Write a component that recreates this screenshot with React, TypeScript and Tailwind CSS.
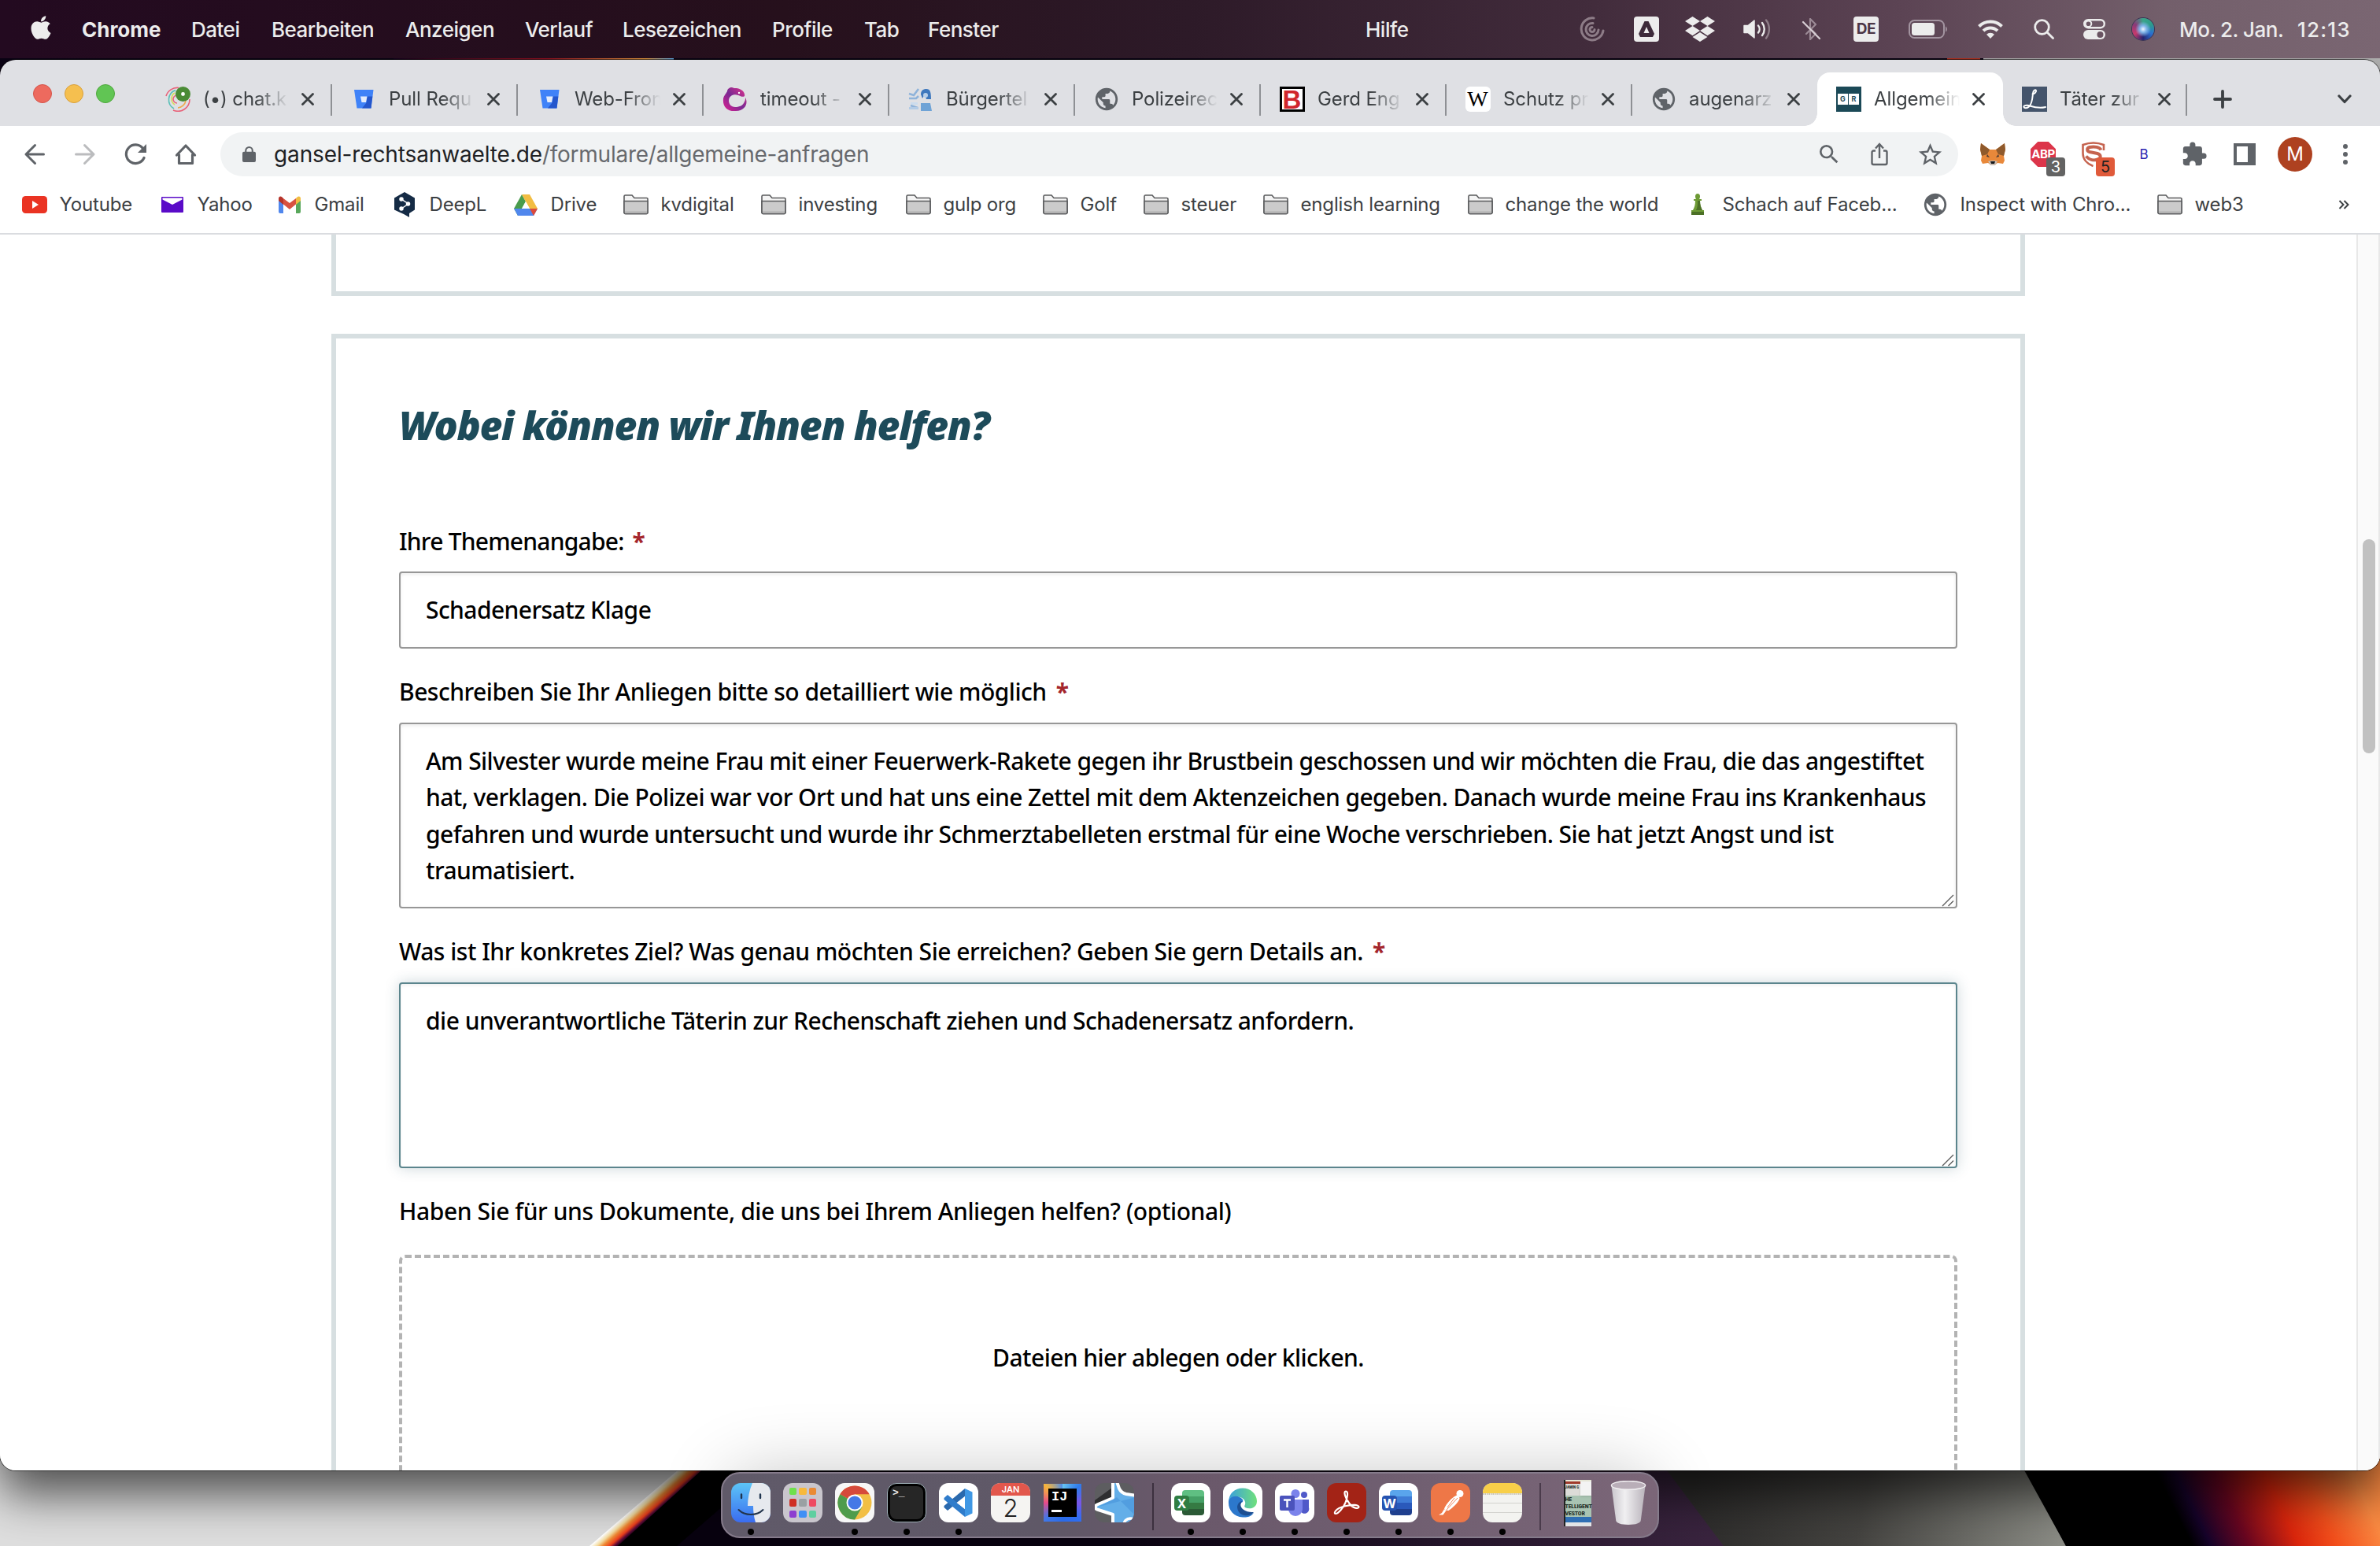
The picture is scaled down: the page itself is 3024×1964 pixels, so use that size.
import type { ReactNode } from "react";
import { FaApple, FaDropbox } from "react-icons/fa";
import { MdExtension, MdPublic, MdSearch, MdStarBorder } from "react-icons/md";

const menuItems: [string, string][] = [
  ["Datei", "w-[102px]"],
  ["Bearbeiten", "w-[170px]"],
  ["Anzeigen", "w-[152px]"],
  ["Verlauf", "w-[124px]"],
  ["Lesezeichen", "w-[190px]"],
  ["Profile", "w-[117px]"],
  ["Tab", "w-[81px]"],
  ["Fenster", "w-[556px]"],
  ["Hilfe", "w-[80px]"],
];

function AppleMenuBar() {
  return (
    <header className="relative z-20 flex h-[74px] shrink-0 items-center bg-[linear-gradient(to_right,#230a20_0%,#26101c_33%,#2d1a28_50%,#422c3c_67%,#5c4454_80%,#735f6b_91%,#7a6672_100%)] text-[26px] font-medium tracking-[-0.5px] text-[#ececec]">
      <div className="flex w-[104px] justify-center pb-1">
        <FaApple className="h-[34px] w-[30px]" />
      </div>
      <div className="w-[139px] font-bold tracking-normal">Chrome</div>
      {menuItems.map(([label, width]) => (
        <div key={label} className={"shrink-0 whitespace-nowrap " + width}>{label}</div>
      ))}
      <div className="ml-[174px] flex h-full items-center">
        <Tray width="w-[67px]">
          <svg viewBox="0 0 32 32" className="size-8" fill="none" stroke="#8d7c87" strokeWidth="3" strokeLinecap="round">
            <path d="M18 2A14 14 0 1 0 30 18" />
            <path d="M17 8.500A8 8 0 1 0 24 17" />
            <path d="M16 13.500a3 3 0 1 0 3 3" />
          </svg>
        </Tray>
        <Tray width="w-[72px]">
          <svg viewBox="0 0 32 32" className="size-8">
            <rect width="32" height="32" rx="4" fill="#ececec" />
            <path d="M13.500 6h5l7.500 16-2 4H8l-2-4z" fill="#3d2a3a" />
            <path d="M16 13l3.500 8h-7z" fill="#ececec" />
          </svg>
        </Tray>
        <Tray width="w-[64px]"><FaDropbox className="size-[38px]" /></Tray>
        <Tray width="w-[82px]">
          <svg viewBox="0 0 36 28" className="h-7 w-9" fill="none" strokeWidth="2.400" strokeLinecap="round">
            <path d="M1 9.500h5L14 3v22l-8-6.500H1z" fill="#ececec" stroke="#ececec" strokeWidth="1.500" strokeLinejoin="round" />
            <path d="M19 9.500a7 7 0 0 1 0 9" stroke="#ececec" />
            <path d="M24 6a13 13 0 0 1 0 16" stroke="#ececec" />
            <path d="M29 2.500a19 19 0 0 1 0 23" stroke="#8d7c87" />
          </svg>
        </Tray>
        <Tray width="w-[54px]">
          <svg viewBox="0 0 24 28" className="h-7 w-6" fill="none" stroke="#9c8b96" strokeWidth="2.200" strokeLinecap="round" strokeLinejoin="round">
            <path d="M6 20l12-12-7-7v26l7-7-5-5" />
            <path d="M2 5l21 21" stroke="#d8cfd5" />
          </svg>
        </Tray>
        <Tray width="w-[86px]">
          <div className="flex size-8 items-center justify-center rounded bg-[#ececec] text-[19px] font-bold text-[#4b3645]">DE</div>
        </Tray>
        <Tray width="w-[72px]">
          <svg viewBox="0 0 50 24" className="h-6 w-[50px]">
            <rect x="1" y="1" width="44" height="22" rx="6.500" fill="none" stroke="#a394a0" strokeWidth="2" />
            <rect x="4" y="4" width="29" height="16" rx="3.500" fill="#ececec" />
            <path d="M47 8.500c2.500 1 2.500 6 0 7z" fill="#a394a0" />
          </svg>
        </Tray>
        <Tray width="w-[86px]">
          <svg viewBox="0 0 32 24" className="h-6 w-8" fill="none" stroke="#ececec" strokeWidth="4">
            <path d="M1.500 8.500a20.500 20.500 0 0 1 29 0" />
            <path d="M7 14.200a12.800 12.800 0 0 1 18 0" />
            <path d="M16 24l-5-5.200a7 7 0 0 1 10 0z" fill="#ececec" stroke="none" />
          </svg>
        </Tray>
        <Tray width="w-[50px]">
          <svg viewBox="0 0 26 26" className="size-[26px]" fill="none" stroke="#ececec" strokeWidth="2.800" strokeLinecap="round">
            <circle cx="10.500" cy="10.500" r="8.800" />
            <path d="M17 17l7.500 7.500" />
          </svg>
        </Tray>
        <Tray width="w-[78px]">
          <svg viewBox="0 0 28 26" className="h-[26px] w-7">
            <rect x="1.200" y="1.200" width="25.600" height="10" rx="5" fill="none" stroke="#ececec" strokeWidth="2.400" />
            <circle cx="6.500" cy="6.200" r="3.800" fill="none" stroke="#ececec" strokeWidth="2" />
            <rect y="14" width="28" height="12" rx="6" fill="#ececec" />
            <circle cx="21.500" cy="20" r="4" fill="#6a5462" />
          </svg>
        </Tray>
        <Tray width="w-[46px]">
          <div className="size-7 rounded-full bg-[radial-gradient(circle_at_50%_50%,#eef4ff_0%,#7fb4e8_22%,transparent_50%),conic-gradient(#3aa58a,#2d9c8c,#2b6fd0,#25246e,#c73a6c,#8a3a78,#3aa58a)] ring-1 ring-[#3a3555]" />
        </Tray>
        <div className="ml-[23px] w-[150px] whitespace-nowrap">Mo. 2. Jan.</div>
        <div className="tracking-[1.200px]">12:13</div>
      </div>
    </header>
  );
}

function Tray({ width, children }: { width: string; children: ReactNode }) {
  return <div className={"flex shrink-0 justify-center " + width}>{children}</div>;
}

function Globe() {
  return <MdPublic className="size-[34px] shrink-0 text-[#5f6368]" />;
}

function BitbucketIcon() {
  return (
    <svg viewBox="0 0 32 32" className="size-8">
      <path d="M4 4h24.500l-3 23.500h-18z" fill="#3f82f8" />
      <path d="M20.500 12.500h6.800l-1.800 15H14l5.500-7z" fill="#2456cc" />
      <path d="M12 12.500h8.500l-1.500 7.500h-5.500z" fill="#e4ecfb" />
    </svg>
  );
}

function ChatIcon() {
  return (
    <svg viewBox="0 0 32 32" className="size-8" fill="none" strokeWidth="1.600">
      <path d="M1 12A15 15 0 0 1 17 1.500M31 16a15 15 0 0 1-21 14" stroke="#e8637a" />
      <path d="M11 28A13 13 0 0 1 13 4.500" stroke="#5cc0b8" />
      <path d="M12 23A9 9 0 0 1 12 8" stroke="#d6de5a" />
      <path d="M16 27a11 11 0 0 0 10-9" stroke="#f0a94c" />
      <path d="M15 21a5 5 0 0 1 0-10" stroke="#e8637a" />
      <circle cx="22.500" cy="9.500" r="9.500" fill="#4a8b35" />
      <circle cx="22.500" cy="9.500" r="2.400" fill="#fff" />
    </svg>
  );
}

function RxIcon() {
  return (
    <svg viewBox="0 0 32 32" className="size-8">
      <defs>
        <linearGradient id="rx" x1="1" y1="0" x2="0" y2="1">
          <stop offset="0" stopColor="#e8318c" />
          <stop offset=".5" stopColor="#7a2a93" />
          <stop offset="1" stopColor="#e01e90" />
        </linearGradient>
      </defs>
      <path d="M6 6c0-3 3-5 6-5 2 1 4 1 6 1 7 1 11 6 10 10-2 2-5 0-8-1-5-2-12 0-12 7 0 5 4 8 8 8 6 0 10-2 12-7 1-2 1-3 1-5 4 7 0 17-12 17C6 32 0 25 1 16c0-3 2-5 5-10z" fill="url(#rx)" />
      <circle cx="21" cy="8" r="1.200" fill="#fff" />
    </svg>
  );
}

function CityIcon() {
  return (
    <svg viewBox="0 0 32 32" className="size-8">
      <path d="M1 9l6 2 6-8M1 15h9l3-3M3 24l9 3" stroke="#8fb3da" strokeWidth="2.600" fill="none" />
      <path d="M16 10c0-6 4-7 7-7 5 0 6 4 6 13h-6l-2-6-3 5z" fill="#3f78bd" />
      <circle cx="22" cy="11" r="3" fill="#b9d0ea" />
      <path d="M16 21h12l2 10H16z" fill="#6fa3d6" />
      <path d="M3 20h9v3H3z" fill="#cbdcee" />
      <path d="M1 26h12v3H1z" fill="#b2cbe6" />
    </svg>
  );
}

const tabs: { title: string; width: string; icon: ReactNode; active?: boolean }[] = [
  { title: "(•) chat.k", width: "w-[236px]", icon: <ChatIcon /> },
  { title: "Pull Requ", width: "w-[236px]", icon: <BitbucketIcon /> },
  { title: "Web-Fron", width: "w-[236px]", icon: <BitbucketIcon /> },
  { title: "timeout -", width: "w-[236px]", icon: <RxIcon /> },
  { title: "Bürgertel", width: "w-[236px]", icon: <CityIcon /> },
  { title: "Polizeirec", width: "w-[236px]", icon: <Globe /> },
  {
    title: "Gerd Eng",
    width: "w-[236px]",
    icon: <div className="flex size-8 items-center justify-center border-[3px] border-black bg-white font-['Liberation_Sans'] text-[33px] leading-none font-bold text-[#d0262c]">B</div>,
  },
  {
    title: "Schutz pr",
    width: "w-[236px]",
    icon: <div className="flex size-8 items-center justify-center rounded-md bg-white font-['Liberation_Serif'] text-[28px] leading-none text-black">W</div>,
  },
  { title: "augenarz", width: "w-[235px]", icon: <Globe /> },
  {
    title: "Allgemein",
    width: "w-[236px]",
    active: true,
    icon: (
      <div className="flex size-8 items-center justify-center gap-px bg-[#1b4957]">
        <span className="flex h-3.5 w-[13px] items-center justify-center bg-white text-[9px] font-bold text-[#1b4957]">G</span>
        <span className="flex h-3.5 w-[13px] items-center justify-center bg-white text-[9px] font-bold text-[#1b4957]">R</span>
      </div>
    ),
  },
  {
    title: "Täter zur",
    width: "w-[234px]",
    icon: (
      <svg viewBox="0 0 32 32" className="size-8">
        <rect width="32" height="32" fill="#44546b" />
        <path d="M13.500 9.500c2.500 0 5-3 4.500-4.500s-3.500-.5-4 3.500-.5 13-5 17c-2.500 2.300-6 2-6.500.500s2.500-3 6-2 12 4.500 21.500 2" fill="none" stroke="#fff" strokeWidth="2" strokeLinecap="round" />
      </svg>
    ),
  },
];

function TabStrip() {
  return (
    <div className="flex h-[84px] items-end bg-[#dfe0e4] text-[#3c4043]">
      <div className="flex w-[186px] shrink-0 gap-4 self-start pt-[31px] pl-[42px]">
        <i className="size-6 rounded-full border border-[#d5544a] bg-[#ed6a5e]" />
        <i className="size-6 rounded-full border border-[#d9a03c] bg-[#f5bf4f]" />
        <i className="size-6 rounded-full border border-[#4fa73d] bg-[#61c554]" />
      </div>
      {tabs.map((tab, i) => (
        <div key={i} className={"relative flex h-[68px] shrink-0 items-center " + tab.width + (tab.active ? " rounded-t-2xl bg-white" : "")}>
          {tab.active && (
            <>
              <i className="absolute bottom-0 -left-4 size-4 bg-[radial-gradient(circle_at_0_0,transparent_15.500px,white_16px)]" />
              <i className="absolute -right-4 bottom-0 size-4 bg-[radial-gradient(circle_at_100%_0,transparent_15.500px,white_16px)]" />
            </>
          )}
          <div className="ml-[23px] flex w-[33px] justify-center">{tab.icon}</div>
          <div className="ml-4 w-[124px] text-[24px] tracking-[-0.1px] whitespace-nowrap [mask-image:linear-gradient(to_right,black_54%,transparent_88%)]">{tab.title}</div>
          <svg viewBox="0 0 16 16" className="ml-px size-4 shrink-0" stroke="#3c4043" strokeWidth="2.800" strokeLinecap="round">
            <path d="M1.500 1.500l13 13M14.500 1.500l-13 13" />
          </svg>
          {i !== 8 && !tab.active && <i className="absolute top-[15px] right-0 h-10 w-0.5 bg-[#8e9094]" />}
        </div>
      ))}
      <div className="flex h-[68px] flex-1 items-center justify-between pr-9 pl-[33px]">
        <svg viewBox="0 0 24 24" className="size-6" stroke="#3c4043" strokeWidth="3.800" strokeLinecap="round">
          <path d="M12 2v20M2 12h20" />
        </svg>
        <svg viewBox="0 0 18 12" className="h-3 w-[18px]" fill="none" stroke="#3c4043" strokeWidth="3.200" strokeLinecap="round" strokeLinejoin="round">
          <path d="M2 2l7 7.500L16 2" />
        </svg>
      </div>
    </div>
  );
}

function ToolButton({ children }: { children: ReactNode }) {
  return <div className="flex h-14 w-16 shrink-0 items-center justify-center">{children}</div>;
}

function Fox() {
  return (
    <svg viewBox="0 0 32 32" className="size-8">
      <path d="M1 2l11 8h8L31 2l1 8-2 8 1 6-2 4-7-1-4 3h-4l-4-3-7 1-2-4 1-6-2-8z" fill="#e8883a" />
      <path d="M1 2l11 8-3 6-7 2-2-8zM31 2L20 10l3 6 7 2 2-8z" fill="#8f5a2c" />
      <path d="M9 16l3 4-4-1zM23 16l-3 4 4-1z" fill="#4a3a35" />
      <path d="M10 25l3 5h6l3-5-4-1h-4z" fill="#c9bdb3" />
      <path d="M13 25h6l-1 3h-4z" fill="#16181c" />
    </svg>
  );
}

function Toolbar() {
  return (
    <div className="flex h-[72px] items-center bg-white pl-3 text-[#5f6368]">
      <ToolButton>
        <svg viewBox="0 0 28 28" className="size-7" fill="none" stroke="#5f6368" strokeWidth="3" strokeLinecap="round" strokeLinejoin="round">
          <path d="M14.500 2.500L3 14l11.500 11.500M3 14h22.500" />
        </svg>
      </ToolButton>
      <ToolButton>
        <svg viewBox="0 0 28 28" className="size-7" fill="none" stroke="#bbbcbe" strokeWidth="3" strokeLinecap="round" strokeLinejoin="round">
          <path d="M13.500 2.500L25 14 13.500 25.500M25 14H2.500" />
        </svg>
      </ToolButton>
      <ToolButton>
        <svg viewBox="0 0 28 28" className="size-7" fill="none" stroke="#5f6368" strokeWidth="3.200" strokeLinecap="round">
          <path d="M25 18.500A11.800 11.800 0 1 1 23.500 6.500" />
          <path d="M28 1v11H17z" fill="#5f6368" stroke="none" />
        </svg>
      </ToolButton>
      <ToolButton>
        <svg viewBox="0 0 28 28" className="size-7" fill="none" stroke="#5f6368" strokeWidth="3.200" strokeLinecap="round" strokeLinejoin="round">
          <path d="M2.500 15L14 3l11.500 12M5.500 14.500V25.500h17V14.500" />
        </svg>
      </ToolButton>
      <div className="ml-3 flex h-14 w-[2208px] shrink-0 items-center rounded-full bg-[#f1f3f4] pr-1 pl-7">
        <svg viewBox="0 0 18 22" className="h-[22px] w-[17px]">
          <path d="M4.500 9V6a4.500 4.500 0 0 1 9 0v3" fill="none" stroke="#5f6368" strokeWidth="2.200" />
          <rect y="7.500" width="18" height="14" rx="2" fill="#5f6368" />
        </svg>
        <div className="ml-[23px] flex-1 text-[28px] tracking-[-0.13px] text-[#202124]">
          gansel-rechtsanwaelte.de<span className="tracking-[-0.24px] text-[#67696d]">/formulare/allgemeine-anfragen</span>
        </div>
        <ToolButton><MdSearch className="size-8" /></ToolButton>
        <ToolButton>
          <svg viewBox="0 0 22 30" className="h-[30px] w-[22px]" fill="none" stroke="#5f6368" strokeWidth="2.400">
            <path d="M6 10.500H3.500a2 2 0 0 0-2 2V26a2 2 0 0 0 2 2h15a2 2 0 0 0 2-2V12.500a2 2 0 0 0-2-2H16" />
            <path d="M11 20V2.500M6 7.500l5-5.500 5 5.500" />
          </svg>
        </ToolButton>
        <ToolButton><MdStarBorder className="size-[35px]" /></ToolButton>
      </div>
      <div className="ml-3 flex items-center">
        <ToolButton><Fox /></ToolButton>
        <ToolButton>
          <div className="relative size-8">
            <div className="flex size-8 items-center justify-center bg-[#dc354a] text-[15px] font-bold tracking-[-0.5px] text-white [clip-path:polygon(29%_0,71%_0,100%_29%,100%_71%,71%_100%,29%_100%,0_71%,0_29%)]">ABP</div>
            <span className="absolute top-5 left-5 flex size-6 items-center justify-center rounded bg-[#636363] text-[20px] text-white">3</span>
          </div>
        </ToolButton>
        <ToolButton>
          <div className="relative size-8">
            <svg viewBox="0 0 32 32" className="size-8" fill="none" stroke="#c5634f" strokeWidth="2.600">
              <path d="M29 11V4q-13-5-26.500 0v11c0 7 5 13 13 16" />
              <path d="M25.500 10.500C24 7 17 5.500 11 7c-4 1.200-3.500 5 0 6l10 2c5 1.500 4.500 6 1 7.500-6 2-12 0-15.500-4" strokeWidth="4" />
            </svg>
            <span className="absolute top-5 left-[19px] flex size-6 items-center justify-center rounded bg-[#e05a3a] text-[20px] text-[#222]">5</span>
          </div>
        </ToolButton>
        <ToolButton><span className="pt-0.5 text-[17px] text-[#2b25b0]">B</span></ToolButton>
        <ToolButton><MdExtension className="size-[34px]" /></ToolButton>
        <ToolButton><div className="h-7 w-7 border-4 border-r-[10px] border-[#5f6368]" /></ToolButton>
        <ToolButton><div className="flex size-11 items-center justify-center rounded-full bg-[#ae4120] text-[24px] text-white">M</div></ToolButton>
        <ToolButton>
          <div className="flex flex-col gap-1">
            <i className="size-1.5 rounded-full bg-[#5f6368]" />
            <i className="size-1.5 rounded-full bg-[#5f6368]" />
            <i className="size-1.5 rounded-full bg-[#5f6368]" />
          </div>
        </ToolButton>
      </div>
    </div>
  );
}

function Folder() {
  return (
    <svg viewBox="0 0 32 26" className="h-[26px] w-8" stroke="#5b5c5e" strokeWidth="1.600">
      <path d="M1 23V2.500A1.500 1.500 0 0 1 2.500 1H11l3 3.500h15.500A1.500 1.500 0 0 1 31 6v17z" fill="#f4f4f4" />
      <path d="M1 8.500h30V23a1.800 1.800 0 0 1-1.800 1.800H2.800A1.800 1.800 0 0 1 1 23z" fill="#cbcbcb" />
      <path d="M2 22.500h28" stroke="#a9a9a9" />
    </svg>
  );
}

const bookmarks: [string, string, ReactNode][] = [
  ["Youtube", "w-[175px]", (
    <svg viewBox="0 0 32 22" className="h-[22px] w-8"><rect width="32" height="22" rx="4.500" fill="#ea3323" /><path d="M13 6l8 5-8 5z" fill="#fff" /></svg>
  )],
  ["Yahoo", "w-[149px]", (
    <svg viewBox="0 0 28 20" className="h-5 w-7"><rect width="28" height="20" rx="1" fill="#5a0bc8" /><path d="M1.500 1.500h25v2L14 10 1.500 3.500z" fill="#fff" /></svg>
  )],
  ["Gmail", "w-[146px]", (
    <svg viewBox="0 0 28 22" className="h-[22px] w-7">
      <path d="M0 4l6 5v13H2a2 2 0 0 1-2-2z" fill="#5087ed" /><path d="M28 4l-6 5v13h4a2 2 0 0 0 2-2z" fill="#58a75b" />
      <path d="M22 3l2-2c2-1.500 4 0 4 2v3l-6 5z" fill="#f2bd42" /><path d="M0 6V3c0-2 2-3.500 4-2l2 2v8z" fill="#b5342b" />
      <path d="M6 3l8 6 8-6v7.500L14 17l-8-6.500z" fill="#d85140" />
    </svg>
  )],
  ["DeepL", "w-[154px]", (
    <svg viewBox="0 0 28 32" className="h-8 w-7">
      <path d="M14 0l13 7.500v15L20 27v5l-7-4L1 22.500v-15z" fill="#152b45" />
      <g fill="#fff" stroke="#fff" strokeWidth="1.500"><path d="M10 9l9 6-9 6" fill="none" /><circle cx="10" cy="9" r="2" /><circle cx="18.500" cy="15" r="2" /><circle cx="10" cy="21" r="2" /></g>
    </svg>
  )],
  ["Drive", "w-[140px]", (
    <svg viewBox="0 0 30 27" className="h-[27px] w-[30px]">
      <path d="M10 0L0 18l5 9 10-18z" fill="#4a9c4d" /><path d="M10 0h10l10 18H20z" fill="#f2bd42" /><path d="M0 18l5 9h20l5-9z" fill="#5087ed" /><path d="M20 18h10l-5 9z" fill="#dc4a3c" /><path d="M10 18l5-9 5 9z" fill="#fff" />
    </svg>
  )],
  ["kvdigital", "w-[175px]", <Folder />],
  ["investing", "w-[184px]", <Folder />],
  ["gulp org", "w-[174px]", <Folder />],
  ["Golf", "w-[128px]", <Folder />],
  ["steuer", "w-[152px]", <Folder />],
  ["english learning", "w-[260px]", <Folder />],
  ["change the world", "w-[276px]", <Folder />],
  ["Schach auf Faceb...", "w-[302px]", (
    <svg viewBox="0 0 32 32" className="size-8">
      <path d="M16 2c2 0 3 1.500 3 3.500S18 9 18 9h3v2h-2c0 5 1 8 3 12h2v6H8v-6h2c2-4 3-7 3-12h-2V9h3s-1-1.500-1-3.500S14 2 16 2z" fill="#6d9a35" />
      <path d="M16 11c0 5 0 8-2 12h8c-2-4-3-7-3-12zM8 25h16v4H8z" fill="#4c7026" />
    </svg>
  )],
  ["Inspect with Chro...", "w-[298px]", <Globe />],
  ["web3", "w-[230px]", <Folder />],
];

function BookmarkBar() {
  return (
    <div className="flex h-[66px] items-center border-b-2 border-[#dadce0] bg-white pb-2 pl-7 text-[24px] tracking-[-0.16px] text-[#3c4043]">
      {bookmarks.map(([label, width, icon]) => (
        <div key={label} className={"flex shrink-0 items-center gap-[15.500px] whitespace-nowrap " + width}>
          <div className="flex w-8 shrink-0 justify-center">{icon}</div>
          {label}
        </div>
      ))}
      <svg viewBox="0 0 14 12" className="h-3 w-3.5" fill="none" stroke="#3c4043" strokeWidth="2">
        <path d="M1.500 1l5 5-5 5M7.500 1l5 5-5 5" />
      </svg>
    </div>
  );
}

function Label({ children, required, tracking }: { children: string; required?: boolean; tracking: string }) {
  return (
    <div className={"mt-8 mb-4 whitespace-nowrap " + tracking}>
      {children}
      {required && <span className="ml-3 font-bold text-[#a4262c]">*</span>}
    </div>
  );
}

function Grip() {
  return (
    <svg viewBox="0 0 16 16" className="absolute right-0.5 bottom-0 size-4" stroke="#5c5c5c" strokeWidth="1.400">
      <path d="M1 15L15 1M8.500 15L15 8.500" />
    </svg>
  );
}

const message = [
  "Am Silvester wurde meine Frau mit einer Feuerwerk-Rakete gegen ihr Brustbein geschossen und wir möchten die Frau, die das angestiftet",
  "hat, verklagen. Die Polizei war vor Ort und hat uns eine Zettel mit dem Aktenzeichen gegeben. Danach wurde meine Frau ins Krankenhaus",
  "gefahren und wurde untersucht und wurde ihr Schmerztabelleten erstmal für eine Woche verschrieben. Sie hat jetzt Angst und ist",
  "traumatisiert.",
];

function Page() {
  return (
    <div className="flex min-h-0 flex-1 overflow-hidden bg-white">
      <main className="flex flex-1 flex-col gap-12 pl-[421px] font-['Noto_Sans','Open_Sans',sans-serif] text-[30px] leading-[46px] font-medium tracking-[-0.57px] text-black">
        <section className="h-[78px] w-[2152px] shrink-0 border-6 border-t-0 border-[#d7dfe1]" />
        <section className="h-[1500px] w-[2152px] shrink-0 border-6 border-[#d7dfe1] px-20 pt-[76px]">
          <h1 className="mb-[91px] text-[50px] leading-[68px] font-black tracking-[-1.350px] text-[#1d4b5a] italic">Wobei können wir Ihnen helfen?</h1>
          <div className="mb-[15px] tracking-[-0.78px]">
            Ihre Themenangabe:<span className="ml-[11px] font-bold text-[#a4262c]">*</span>
          </div>
          <div className="h-[98px] rounded border-2 border-[#979797] px-8 pt-6 shadow-[inset_0_2px_4px_rgba(0,0,0,0.08)]">Schadenersatz Klage</div>
          <Label required tracking="tracking-[-0.490px]">Beschreiben Sie Ihr Anliegen bitte so detailliert wie möglich</Label>
          <div className="relative h-[236px] rounded border-2 border-[#979797] px-8 pt-6 leading-[46.300px] shadow-[inset_0_2px_4px_rgba(0,0,0,0.08)]">
            {message.map((line) => (
              <div key={line} className="whitespace-nowrap">{line}</div>
            ))}
            <Grip />
          </div>
          <Label required tracking="tracking-[-0.490px]">Was ist Ihr konkretes Ziel? Was genau möchten Sie erreichen? Geben Sie gern Details an.</Label>
          <div className="relative h-[236px] rounded border-2 border-[#5b858d] px-8 pt-6 tracking-[-0.520px] shadow-[0_0_18px_rgba(29,75,90,0.22),inset_0_2px_4px_rgba(0,0,0,0.06)]">
            die unverantwortliche Täterin zur Rechenschaft ziehen und Schadenersatz anfordern.
            <Grip />
          </div>
          <Label tracking="tracking-[-0.430px]">Haben Sie für uns Dokumente, die uns bei Ihrem Anliegen helfen? (optional)</Label>
          <div className="mt-8 h-[420px] rounded-lg border-4 border-dashed border-[#b3b3b3] pt-[104px] text-center">Dateien hier ablegen oder klicken.</div>
        </section>
      </main>
      <div className="w-[30px] shrink-0 border-x-2 border-[#e8e8e8] bg-[#fafafa] pt-[387px] pl-1.5">
        <div className="h-[272px] w-4 rounded-full bg-[#c1c1c1]" />
      </div>
    </div>
  );
}

function Wallpaper() {
  return (
    <svg className="absolute inset-0" width="3024" height="1964" viewBox="0 0 3024 1964">
      <defs>
        <linearGradient id="fringe" gradientUnits="userSpaceOnUse" x1="861" y1="1868" x2="877" y2="1886.500">
          <stop offset="0" stopColor="#ffffff" />
          <stop offset=".22" stopColor="#f5dda0" />
          <stop offset=".42" stopColor="#f08a34" />
          <stop offset=".65" stopColor="#ee3f1c" />
          <stop offset=".82" stopColor="#5a0a38" />
          <stop offset="1" stopColor="#000" />
        </linearGradient>
        <linearGradient id="slab" gradientUnits="userSpaceOnUse" x1="2150" y1="1900" x2="2620" y2="1990">
          <stop offset="0" stopColor="#2c2b2a" />
          <stop offset=".45" stopColor="#444340" />
          <stop offset="1" stopColor="#8d8e87" />
        </linearGradient>
        <linearGradient id="ember" gradientUnits="userSpaceOnUse" x1="2738" y1="1868" x2="2938" y2="1770">
          <stop offset="0" stopColor="#000" />
          <stop offset=".1" stopColor="#16032a" />
          <stop offset=".3" stopColor="#6a0620" />
          <stop offset=".55" stopColor="#dc260c" />
          <stop offset=".75" stopColor="#f4501c" />
          <stop offset="1" stopColor="#fb8a42" />
        </linearGradient>
        <linearGradient id="arc" x1="0" x2="1">
          <stop offset="0" stopColor="#14021c" />
          <stop offset=".55" stopColor="#9c1020" />
          <stop offset=".9" stopColor="#f0a040" />
          <stop offset="1" stopColor="#60b0f0" />
        </linearGradient>
        <linearGradient id="plum" x1="0" x2="1">
          <stop offset="0" stopColor="#08020f" />
          <stop offset="1" stopColor="#3b2540" />
        </linearGradient>
      </defs>
      <rect width="3024" height="1964" fill="#0a0314" />
      <rect x="500" y="72" width="356" height="6" fill="url(#arc)" />
      <rect x="2474" y="72" width="42" height="6" fill="#b8301c" />
      <rect x="2520" y="72" width="504" height="60" fill="#b4b4b4" />
      <path d="M0 1800h940v68L828 1964H0z" fill="#dedede" />
      <path d="M861 1868h79v96H749z" fill="url(#fringe)" />
      <path d="M900 1860h80L860 1964h-75z" fill="#000" />
      <path d="M980 1860L860 1964h1250v-104z" fill="#08020f" />
      <rect x="1400" y="1860" width="800" height="104" fill="url(#plum)" />
      <path d="M2112 1860h458l55 104h-435z" fill="url(#slab)" />
      <path d="M2571 1866h200v98H2625z" fill="#000" />
      <rect x="2738" y="1780" width="286" height="184" fill="url(#ember)" />
    </svg>
  );
}

function DockItem({ children, running, width = "w-[66px]" }: { children: ReactNode; running?: boolean; width?: string }) {
  return (
    <div className={"flex shrink-0 flex-col items-center " + width}>
      <div className="flex size-[50px] items-center justify-center">{children}</div>
      {running && <i className="mt-2 size-2 rounded-full bg-black" />}
    </div>
  );
}

const tile = "size-[50px] rounded-[12px]";

function OfficeGlyph({ letter, back, front }: { letter: string; back: string[]; front: string }) {
  return (
    <div className={"relative flex items-center justify-end bg-white pr-2 " + tile}>
      <div className="flex h-8 w-7 flex-col overflow-hidden rounded-sm">
        {back.map((color) => (
          <i key={color} className={"flex-1 " + color} />
        ))}
      </div>
      <span className={"absolute top-4 left-1 flex size-[19px] items-center justify-center rounded-sm text-[16px] leading-none font-bold text-white " + front}>{letter}</span>
    </div>
  );
}

const launchpad = [
  "bg-[#6fe04c]", "bg-[#f7b93c]", "bg-[#ea8a35]",
  "bg-[#cf2f25]", "bg-[#9aa0a3]", "bg-[#ee4a62]",
  "bg-[#8d3fd0]", "bg-[#3f8ff5]", "bg-[#5fcfa0]",
];

function Dock() {
  return (
    <div className="absolute top-[1870px] left-[916px] z-10 flex h-[84px] w-[1192px] rounded-[24px] border-2 border-[#857b8b] bg-[linear-gradient(to_right,#605a69_0%,#5f5867_35%,#6a586a_50%,#6f5e70_70%,#7b6678_100%)] pt-3 pl-[3px]">
      <DockItem running>
        <svg viewBox="0 0 50 50" className={tile}>
          <defs><linearGradient id="fd" x1="0" y1="0" x2="0" y2="1"><stop offset="0" stopColor="#5cc5f7" /><stop offset="1" stopColor="#3a6cf0" /></linearGradient></defs>
          <rect width="50" height="50" fill="url(#fd)" />
          <path d="M27 0c-4 9-6 20-6 29h7c0 8 1 15 3 21h19V0z" fill="#e6e9ee" />
          <path d="M13 14.500v4.500M37 14.500v4.500" stroke="#1f3550" strokeWidth="2.400" strokeLinecap="round" />
          <path d="M9.500 34c8 8 23 8 31 0" fill="none" stroke="#22344c" strokeWidth="2" strokeLinecap="round" />
        </svg>
      </DockItem>
      <DockItem>
        <div className={"grid grid-cols-3 content-center justify-items-center gap-y-[5px] bg-[#c9c6cd] px-[6px] " + tile}>
          {launchpad.map((c) => <i key={c} className={"size-[9.500px] rounded-[2px] " + c} />)}
        </div>
      </DockItem>
      <DockItem running>
        <svg viewBox="0 0 50 50" className={tile}>
          <rect width="50" height="50" fill="#f7f7f7" />
          <circle cx="25" cy="25" r="21.500" fill="#f2bf45" />
          <path d="M25 25L6.400 14.200A21.500 21.500 0 0 1 43.600 14.200H25z" fill="#d64a3b" />
          <path d="M6.400 14.200A21.500 21.500 0 0 0 25 46.500l9.300-16.100L25 25z" fill="#4f9c4c" />
          <circle cx="25" cy="25" r="10.500" fill="#fff" />
          <circle cx="25" cy="25" r="8.600" fill="#4478e6" />
        </svg>
      </DockItem>
      <DockItem running>
        <div className={"flex border border-[#9fb0b8] bg-black p-[3px] " + tile}>
          <div className="flex flex-1 rounded-[8px] bg-[#262626] pl-[3px] font-['Liberation_Mono'] text-[13px] leading-[17px] font-bold text-[#e8e8e8]">&gt;_</div>
        </div>
      </DockItem>
      <DockItem running>
        <svg viewBox="0 0 50 50" className={tile}>
          <rect width="50" height="50" fill="#fff" />
          <path d="M33 7l9.500 4.500v27L33 43z" fill="#3f97e4" />
          <path d="M33 7v10L11 35l-4.500-4v-2z" fill="#2a69ad" />
          <path d="M33 43V33L11 15l-4.500 4v2z" fill="#2f7ccb" />
          <path d="M33 17v16l-10.500-8z" fill="#fff" />
        </svg>
      </DockItem>
      <DockItem>
        <div className={"flex flex-col overflow-hidden bg-[#f5f4f2] text-center " + tile}>
          <div className="h-4 bg-[#e2574c] text-[11px] leading-4 font-semibold text-white">JAN</div>
          <div className="text-[31px] leading-[32px] font-light text-[#222]">2</div>
        </div>
      </DockItem>
      <DockItem>
        <div className="flex size-12 items-center justify-center bg-[conic-gradient(#6ac7f0,#2f7bea,#7b55e8,#2f6df0,#2a6be8,#3f77e8,#e84a8a,#f5b43c,#4a8ef0)]">
          <div className="flex size-9 flex-col bg-black pl-1 font-['Liberation_Mono'] text-[17px] leading-[22px] font-bold text-white">
            IJ
            <i className="mt-[5px] h-[3px] w-[13px] bg-white" />
          </div>
        </div>
      </DockItem>
      <DockItem>
        <svg viewBox="0 0 50 50" className={tile}>
          <rect width="50" height="50" fill="#5d5d60" />
          <path d="M0 22L22 6v14L0 27z" fill="#2e2e30" />
          <path d="M23-6v25L3 27.500c-3 1.500-3 5 0 6L23 40v14h30V16L40 14c-5-1-7-3-9-7l-4-12z" fill="#63aee8" stroke="#fff" strokeWidth="4" strokeLinejoin="round" />
          <path d="M5 30l23-12 24 24V18z" fill="#4591d8" opacity=".55" />
          <circle cx="45" cy="53" r="8" fill="#6db4ea" stroke="#fff" strokeWidth="3.500" />
        </svg>
      </DockItem>
      <div className="flex w-[31px] shrink-0 justify-center"><i className="h-[60px] w-0.5 bg-[#3c303f]" /></div>
      <DockItem running><OfficeGlyph letter="X" back={["bg-[#5fbf82]", "bg-[#45a066]", "bg-[#357a43]", "bg-[#2b5a36]"]} front="bg-[#2f7d42]" /></DockItem>
      <DockItem running>
        <svg viewBox="0 0 50 50" className={tile}>
          <defs>
            <linearGradient id="edge" x1="0" x2="1"><stop offset="0" stopColor="#3aa0dc" /><stop offset="1" stopColor="#6fe07c" /></linearGradient>
          </defs>
          <rect width="50" height="50" fill="#fff" />
          <path d="M7 25C7 13 15 6.500 25 6.500S43 14 43 23s-9 11-15 8c-2-2 1-3 0-7-1-5-8-8-14-5z" fill="url(#edge)" />
          <path d="M7 25c0-7 8-10 14-7 4 2 5 4 4 6-5 2-5 11 2 15 4 2 8 1 12-1-4 5-9 6-14 5.500C14 43 7 35 7 25z" fill="#2c78cc" />
          <path d="M18 30c1-5 4-7 6-7-3 4-2 9 4 12 4 2 8 2 11 2-3 4-8 5-12 4-6-1-9-6-9-11z" fill="#1d4f92" />
        </svg>
      </DockItem>
      <DockItem running>
        <svg viewBox="0 0 50 50" className={tile}>
          <rect width="50" height="50" fill="#fff" />
          <circle cx="37" cy="15" r="4" fill="#5059c9" /><path d="M32 21h11v10a5.500 5.500 0 0 1-11 4z" fill="#5059c9" />
          <circle cx="26" cy="13.500" r="5.500" fill="#7b83eb" /><path d="M17 21h18v12a9 9 0 0 1-18 0z" fill="#7b83eb" />
          <rect x="6" y="16" width="19" height="19" rx="2" fill="#4b53bc" />
          <path d="M11 21.500h9M15.500 21.500V31" stroke="#fff" strokeWidth="2.400" />
        </svg>
      </DockItem>
      <DockItem running>
        <svg viewBox="0 0 50 50" className={tile}>
          <rect width="50" height="50" fill="#a32316" />
          <path d="M24 10.500c3.500 0 2 8-.5 14.500S14 39 11 39s-.5-6.500 11-9.500 19-1.500 18.500 1-7 2-12-4.500S20.500 10.500 24 10.500z" fill="none" stroke="#fff" strokeWidth="2.200" strokeLinejoin="round" />
        </svg>
      </DockItem>
      <DockItem running><OfficeGlyph letter="W" back={["bg-[#5aa5ec]", "bg-[#3f7cd6]", "bg-[#2a59bb]", "bg-[#1f3f8e]"]} front="bg-[#2553b0]" /></DockItem>
      <DockItem running>
        <svg viewBox="0 0 50 50" className={tile}>
          <rect width="50" height="50" fill="#ee7747" />
          <circle cx="37" cy="13.500" r="4.500" fill="#fff" />
          <path d="M32 16c1.500-1 5 1.500 4.500 4-2 5-8 11-14 15l-4-.500-1.500-2C20 26 26 19 32 16z" fill="#fff" />
          <path d="M34 19L20 34M30 19l-9 12" stroke="#ee7747" strokeWidth=".9" />
          <path d="M17 33l-3 5-4 2.500h5.500l4-5.500z" fill="#fff" />
        </svg>
      </DockItem>
      <DockItem running>
        <svg viewBox="0 0 50 50" className={tile}>
          <rect width="50" height="50" fill="#f3f3f0" />
          <rect width="50" height="13" fill="#f8cf48" />
          <path d="M0 14h50" stroke="#b9b4a4" strokeWidth="1.500" strokeDasharray="1.500 1" />
          <path d="M0 25.500h50M0 37.500h50" stroke="#d2d2ce" strokeWidth="1" />
        </svg>
      </DockItem>
      <div className="flex w-[30px] shrink-0 justify-center"><i className="h-[60px] w-0.5 bg-[#4a3b4b]" /></div>
      <DockItem width="w-[64px]">
        <div className="relative flex h-[59px] w-[35px] shrink-0 flex-col border-l-2 border-[#222] bg-[#a9c4b2] font-['Roboto'] text-[8px] leading-[9px] font-bold text-[#1c2a24] [font-stretch:75%]">
          <i className="h-0.5 bg-[#e8e8d8]" />
          <i className="h-[3px] bg-[#a03a2c]" />
          <span className="h-[15px] bg-[#dcdcd8] pt-px text-[5px] leading-[6px]">JAMIN G</span>
          <span className="tracking-tight">HE</span>
          <span className="tracking-tight">TELLIGENT</span>
          <span className="tracking-tight">VESTOR</span>
          <i className="h-[7px] bg-[#2f6fb4]" />
          <i className="flex-1 bg-[#e2e4e6]" />
          <i className="absolute top-0.5 right-0 h-[18px] w-3.5 bg-[#f3f3f3] shadow-sm" />
        </div>
      </DockItem>
      <DockItem>
        <svg viewBox="0 0 46 58" className="h-[57px] w-[46px] shrink-0">
          <defs><linearGradient id="bin" x1="0" x2="1"><stop offset="0" stopColor="#c9c6cc" /><stop offset=".4" stopColor="#f0eff1" /><stop offset="1" stopColor="#b9b3bb" /></linearGradient></defs>
          <path d="M1 6l6 46c1 3 6 5 16 5s15-2 16-5l6-46z" fill="url(#bin)" />
          <ellipse cx="23" cy="6" rx="22" ry="5.500" fill="#b9aeb8" stroke="#f2f0f2" strokeWidth="1.400" />
        </svg>
      </DockItem>
    </div>
  );
}

export default function App() {
  return (
    <div className="relative flex h-[1964px] w-[3024px] flex-col overflow-hidden font-['Inter','Liberation_Sans',sans-serif]">
      <Wallpaper />
      <AppleMenuBar />
      <div className="relative mt-0.5 flex h-[1792px] flex-col rounded-[20px] shadow-[0_0_0_1px_rgba(0,0,0,0.6),0_30px_60px_rgba(0,0,0,0.65)]">
        <div className="relative flex min-h-0 flex-1 flex-col overflow-hidden rounded-[20px]">
          <TabStrip />
          <Toolbar />
          <BookmarkBar />
          <Page />
          <i className="pointer-events-none absolute top-[1794px] left-[930px] h-[84px] w-[1164px] rounded-[24px] shadow-[0_8px_90px_4px_rgba(0,0,0,0.24)]" />
        </div>
      </div>
      <Dock />
    </div>
  );
}
